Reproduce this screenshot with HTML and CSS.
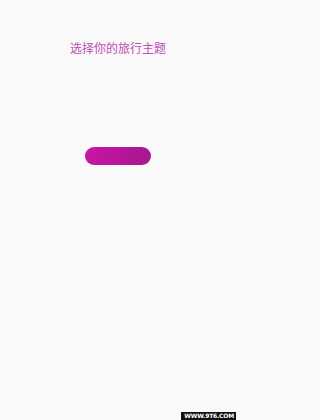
FILE: index.html
```html
<!DOCTYPE html>
<html lang="zh">
<head>
<meta charset="utf-8">
<link rel="stylesheet" href="styles.css">
</head>
<body>
<main class="screen">
  <h1 class="title">选择你的旅行主题</h1>
  <div class="actions">
    <button class="pill" type="button" aria-label="开始"></button>
  </div>
  <div class="watermark">WWW.9T6.COM</div>
</main>
</body>
</html>
```
FILE: styles.css
```css
html, body {
  margin: 0;
  padding: 0;
  background: #fafafa;
}
.screen {
  position: relative;
  width: 236px;
  height: 420px;
  display: flex;
  flex-direction: column;
  align-items: center;
  font-family: "Noto Sans CJK SC", "Noto Sans", sans-serif;
}
.title {
  margin: 39px 0 0;
  font-size: 12px;
  line-height: 17px;
  font-weight: 400;
  color: #c04cb9;
  letter-spacing: 0;
}
.actions {
  margin-top: 91px;
  display: flex;
  justify-content: center;
}
.pill {
  width: 66px;
  height: 18px;
  border: 0;
  padding: 0;
  border-radius: 9px;
  background: linear-gradient(90deg, #c914a6 0%, #a8178e 100%);
}
.watermark {
  position: absolute;
  right: 0;
  bottom: 0;
  background: #111;
  color: #fff;
  font-family: "DejaVu Sans", sans-serif;
  font-weight: 700;
  font-size: 6px;
  line-height: 8px;
  padding: 0 2px 0 3px;
  letter-spacing: -0.2px;
}
```
